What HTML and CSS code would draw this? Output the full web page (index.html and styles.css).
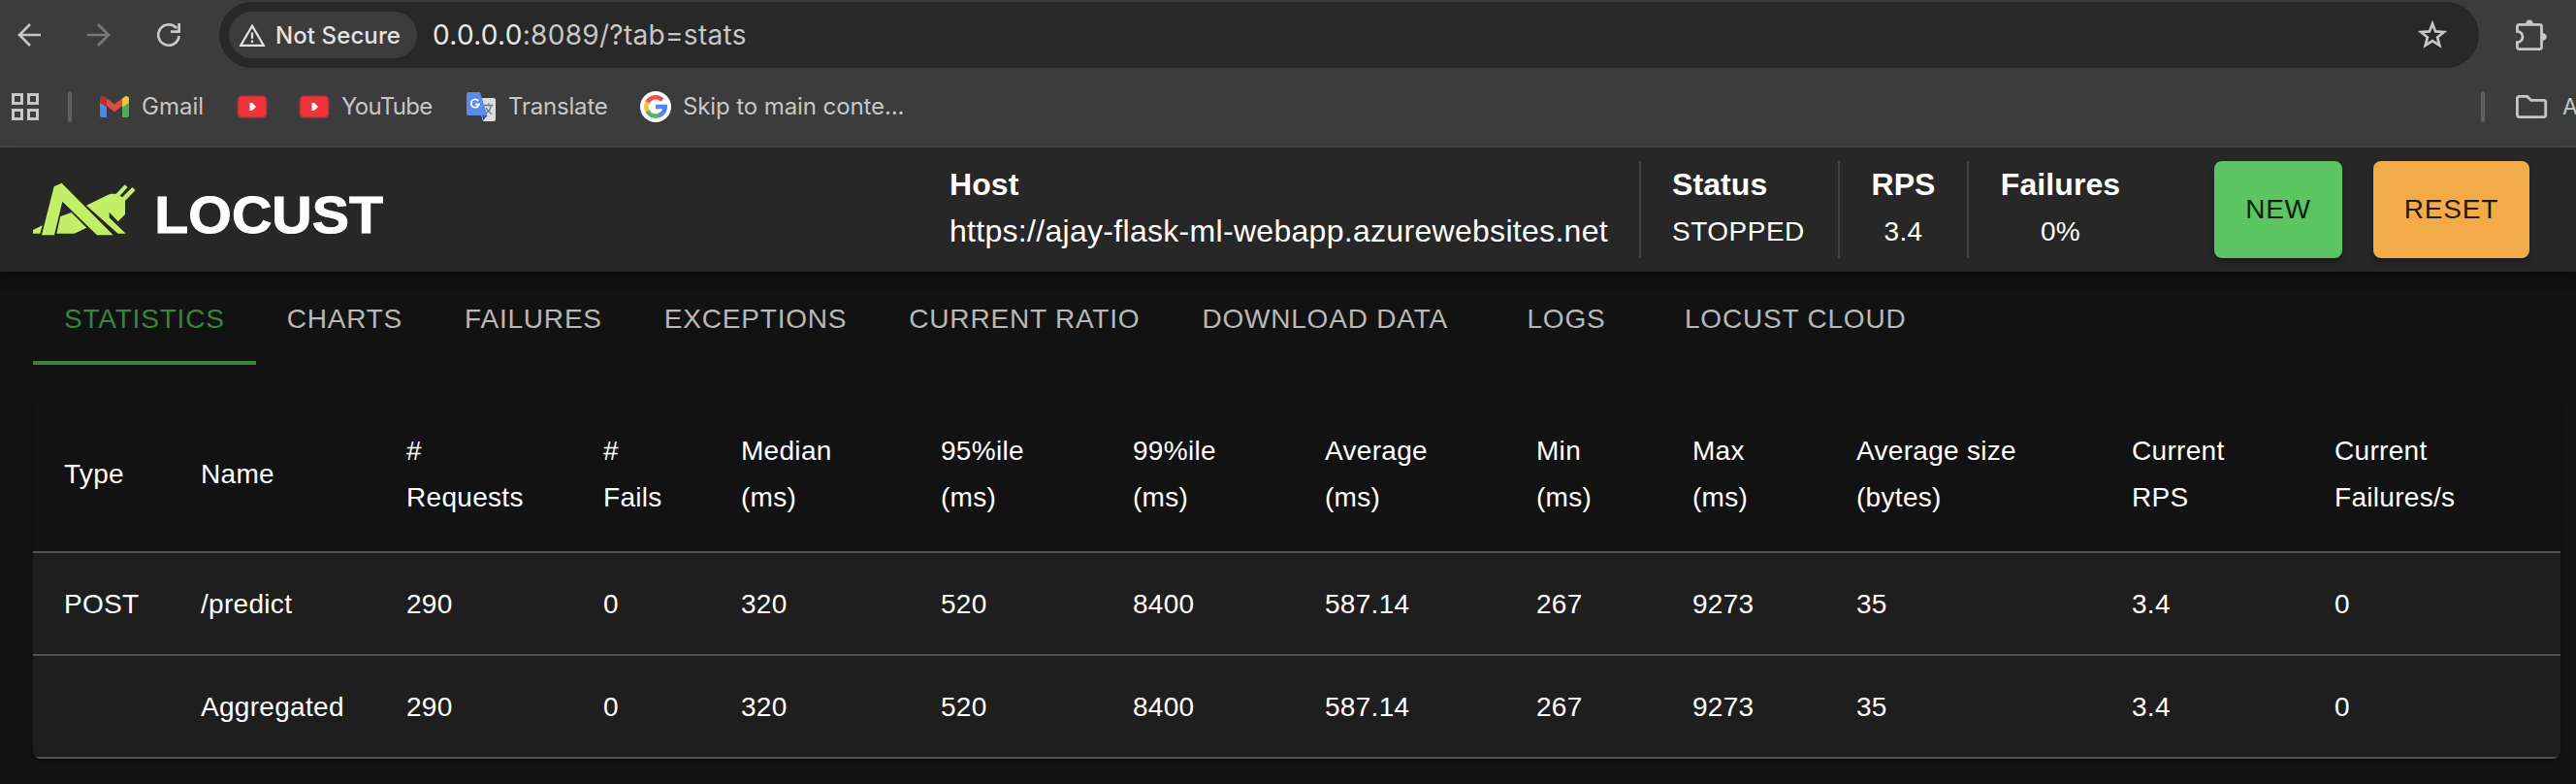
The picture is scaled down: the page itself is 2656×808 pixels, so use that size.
FILE: index.html
```html
<!DOCTYPE html>
<html lang="en">
<head>
<meta charset="utf-8">
<title>Locust</title>
<link rel="stylesheet" href="styles.css">
</head>
<body>
<div class="browser">
  <div class="toolbar">
    <svg class="nav-icon" viewBox="0 0 24 24"><path d="M24 12H2M13 1L2 12l11 11" fill="none" stroke="#c7c7c7" stroke-width="2.6"/></svg>
    <svg class="nav-icon" viewBox="0 0 24 24"><path d="M0 12h22M11 1l11 11-11 11" fill="none" stroke="#7a7a7a" stroke-width="2.6"/></svg>
    <svg class="nav-icon" viewBox="0 0 24 24"><path d="M22.6 13A10.7 10.7 0 1 1 20.2 5.2" fill="none" stroke="#c7c7c7" stroke-width="2.7"/><path d="M22.6 0v8.6H14" fill="none" stroke="#c7c7c7" stroke-width="2.8"/></svg>
    <div class="address">
      <div class="chip">
        <svg class="warn" viewBox="0 0 28 24"><path d="M14 2.6L25.8 22.8H2.2z" fill="none" stroke="#e3e3e3" stroke-width="2.2"/><path d="M14 9.5v6.2M14 17.6v2.4" stroke="#e3e3e3" stroke-width="2.2"/></svg>
        <span class="chip-text">Not Secure</span>
      </div>
      <div class="url"><span class="url-host">0.0.0.0</span>:8089/?tab=stats</div>
      <svg class="star" viewBox="0 0 32 32"><path d="M16 4.5l3.1 7.9 8.6.6-6.6 5.4 2.2 8.4-7.3-4.6-7.3 4.6 2.2-8.4L4.300 13l8.600-.6z" fill="none" stroke="#c7c7c7" stroke-width="2.700"/></svg>
    </div>
    <svg class="puzzle" viewBox="0 0 32 32"><path d="M4 5.400h20.500a2 2 0 0 1 2 2V28.600a2 2 0 0 1-2 2H3.400a2 2 0 0 1-2-2V23.600a5.200 5.200 0 0 0 0-11.200V7.400a2 2 0 0 1 2-2z" fill="none" stroke="#c7c7c7" stroke-width="2.800"/><path d="M10 5a4 4.600 0 0 1 8 0zM27 14a4.800 4 0 0 1 0 8z" fill="#c7c7c7"/></svg>
  </div>
  <div class="bookmarks">
    <svg class="apps" viewBox="0 0 28 28"><path d="M1.500 1.500h9v9h-9zM17.500 1.500h9v9h-9zM1.500 17.500h9v9h-9zM17.500 17.500h9v9h-9z" fill="none" stroke="#c7c7c7" stroke-width="3"/></svg>
    <i class="bar bar-left"></i>
    <div class="bookmark bm-gmail">
      <svg class="gmail" viewBox="0 0 30 22"><path d="M0 5l7 5v12H2a2 2 0 0 1-2-2z" fill="#4f86ee"/><path d="M30 5l-7 5v12h5a2 2 0 0 0 2-2z" fill="#57a85b"/><path d="M7 2.500l8 6 8-6V10l-8 6.500L7 10z" fill="#dc4e3f"/><path d="M0 7V3C0 0 3-1 5 1l2 1.500V11.500z" fill="#b5332b"/><path d="M30 7V3c0-3-3-4-5-2l-2 1.500v9z" fill="#f4c042"/></svg>
      <span class="t-gmail">Gmail</span>
    </div>
    <svg class="yt" viewBox="0 0 32 24"><rect x=".5" y=".3" width="31" height="23.400" rx="5" fill="#a53439"/><rect x="2" y="1.500" width="28" height="21" rx="4" fill="#ee333d"/><path d="M13.500 8h2.500l4 4-4 4h-2.500z" fill="#fff"/></svg>
    <div class="bookmark bm-youtube">
      <svg class="yt" viewBox="0 0 32 24"><rect x=".5" y=".3" width="31" height="23.400" rx="5" fill="#a53439"/><rect x="2" y="1.500" width="28" height="21" rx="4" fill="#ee333d"/><path d="M13.500 8h2.500l4 4-4 4h-2.500z" fill="#fff"/></svg>
      <span class="t-youtube">YouTube</span>
    </div>
    <div class="bookmark bm-translate">
      <svg class="translate" viewBox="0 0 30 30"><path d="M10 6h18a2 2 0 0 1 2 2v20a2 2 0 0 1-2 2H17z" fill="#dedede"/><path d="M16 24h5.500l-4.500 5.500z" fill="#3a4fb5"/><path d="M2 0h12l7.500 24H2a2 2 0 0 1-2-2V2a2 2 0 0 1 2-2z" fill="#5b8bee"/><path d="M12.300 9A4.200 4.200 0 1 0 13 12.500H9.200" fill="none" stroke="#fff" stroke-width="1.800"/><path d="M18 13.500h9.500M22.700 11.500v2M25.500 13.500c-.8 4-3.500 7-6 8.500M20 16c1 2.500 3.500 5 6.500 6.500" fill="none" stroke="#607d8b" stroke-width="1.300"/></svg>
      <span class="t-translate">Translate</span>
    </div>
    <div class="bookmark bm-google">
      <svg class="google" viewBox="0 0 32 32"><circle cx="16" cy="16" r="16" fill="#fff"/><g fill="none" stroke-width="4.600"><path d="M22.900 9.100A9.700 9.700 0 0 0 7.200 12" stroke="#ea5548"/><path d="M7.600 11.200A9.700 9.700 0 0 0 7.800 21" stroke="#f6c33c"/><path d="M7.500 20.500A9.700 9.700 0 0 0 21 24.300" stroke="#5bb464"/><path d="M20.200 24.700A9.700 9.700 0 0 0 25.700 16H16" stroke="#4a87f2"/></g></svg>
      <span class="t-google">Skip to main conte...</span>
    </div>
    <i class="bar bar-right"></i>
    <svg class="folder" viewBox="0 0 32 24"><path d="M3.400 1.400h8.300l4 4h13a2 2 0 0 1 2 2v13.200a2 2 0 0 1-2 2H3.400a2 2 0 0 1-2-2V3.400a2 2 0 0 1 2-2z" fill="none" stroke="#c7c7c7" stroke-width="2.800"/></svg>
    <span class="folder-text">A</span>
  </div>
</div>

<header class="header">
  <svg class="logo" viewBox="102 115 1092 168">
    <g fill="#c3ee68">
      <path d="M102 262l29-14-7 25h-22z"/>
      <path d="M167 128l24-11L350 278h-50L193 174l-25 104h-39z"/>
      <path d="M187 220l34-12 47 47-38 18h-55z"/>
      <path d="M267 186l74-36h18l27-28 9 8-24 26 7 5 31-31 10 9-32 33v42l-22 22-27-29v17l51 49h-24z"/>
    </g>
    <text class="logo-text" x="478" y="272" textLength="707" lengthAdjust="spacingAndGlyphs">LOCUST</text>
  </svg>
  <div class="stats">
    <div class="stat stat-host"><b>Host</b><span class="host-url">https://ajay-flask-ml-webapp.azurewebsites.net</span></div>
    <div class="stat stat-status"><b>Status</b><span>STOPPED</span></div>
    <div class="stat stat-rps"><b>RPS</b><span>3.4</span></div>
    <div class="stat stat-failures"><b>Failures</b><span>0%</span></div>
  </div>
  <button class="btn btn-new">NEW</button>
  <button class="btn btn-reset">RESET</button>
</header>

<nav class="tabs">
  <a class="tab tab-active">STATISTICS</a><a class="tab">CHARTS</a><a class="tab">FAILURES</a><a class="tab">EXCEPTIONS</a><a class="tab">CURRENT RATIO</a><a class="tab">DOWNLOAD DATA</a><a class="tab">LOGS</a><a class="tab">LOCUST CLOUD</a>
</nav>

<main class="panel">
  <table class="table">
    <colgroup><col class="c1"><col class="c2"><col class="c3"><col class="c4"><col class="c5"><col class="c6"><col class="c7"><col class="c8"><col class="c9"><col class="c10"><col class="c11"><col class="c12"><col></colgroup>
    <thead><tr><th>Type</th><th>Name</th><th>#<br>Requests</th><th>#<br>Fails</th><th>Median<br>(ms)</th><th>95%ile<br>(ms)</th><th>99%ile<br>(ms)</th><th>Average<br>(ms)</th><th>Min<br>(ms)</th><th>Max<br>(ms)</th><th>Average size<br>(bytes)</th><th>Current<br>RPS</th><th>Current<br>Failures/s</th></tr></thead>
    <tbody>
      <tr><td>POST</td><td>/predict</td><td>290</td><td>0</td><td>320</td><td>520</td><td>8400</td><td>587.14</td><td>267</td><td>9273</td><td>35</td><td>3.4</td><td>0</td></tr>
      <tr><td></td><td>Aggregated</td><td>290</td><td>0</td><td>320</td><td>520</td><td>8400</td><td>587.14</td><td>267</td><td>9273</td><td>35</td><td>3.4</td><td>0</td></tr>
    </tbody>
  </table>
</main>
</body>
</html>
```
FILE: styles.css
```css
* { box-sizing: border-box; }
body {
  margin: 0;
  height: 808px;
  overflow: hidden;
  background: #121212;
  color: #fff;
  font-family: "Liberation Sans", Arial, sans-serif;
  font-size: 28px;
}
svg { display: block; flex: none; overflow: visible; }

.browser {
  height: 152px;
  overflow: hidden;
  background: #3c3c3c;
  border-bottom: 2px solid #4a4a4a;
  font-family: Inter, sans-serif;
  color: #c7c7c7;
}
.toolbar { display: flex; align-items: center; height: 72px; padding-left: 18px; }
.nav-icon { width: 24px; height: 24px; margin-right: 48px; }
.nav-icon:nth-child(3) { margin-right: 40px; }
.address {
  display: flex;
  align-items: center;
  width: 2330px;
  height: 68px;
  padding: 0 32px 0 10px;
  border-radius: 34px;
  background: #282828;
}
.chip {
  display: flex;
  align-items: center;
  width: 194px;
  height: 48px;
  padding-left: 10px;
  border-radius: 24px;
  background: #3c3c3c;
  color: #e3e3e3;
}
.warn { width: 28px; height: 24px; margin-right: 10px; }
.chip-text { font-size: 24px; font-weight: 500; white-space: nowrap; letter-spacing: 0.1px; }
.url { flex: 1; margin-left: 16px; font-size: 28px; letter-spacing: 0.3px; }
.url-host { color: #e8e8e8; }
.star { width: 32px; height: 32px; }
.puzzle { width: 32px; height: 32px; margin-left: 38px; }

.bookmarks {
  display: flex;
  align-items: center;
  height: 76px;
  padding-left: 12px;
  font-size: 24px;
  white-space: nowrap;
}
.bookmark span { margin-top: -2px; }
.apps { width: 28px; height: 28px; }
.bar { flex: none; width: 4px; height: 32px; border-radius: 2px; background: #5f5f5f; }
.bar-left { margin: 0 29px 0 30px; }
.bookmark { display: flex; align-items: center; }
.gmail { width: 30px; height: 22px; margin-right: 13px; }
.yt { width: 32px; height: 24px; }
.bm-gmail { width: 141px; }
.bm-youtube { width: 173px; margin-left: 32px; }
.bm-youtube .yt { margin-right: 12px; }
.t-youtube { letter-spacing: -0.7px; }
.bm-translate { width: 179px; }
.t-translate { letter-spacing: -0.2px; }
.t-google { letter-spacing: -0.1px; }
.translate { width: 30px; height: 30px; margin-right: 13px; }
.google { width: 32px; height: 32px; margin-right: 12px; }
.bar-right { margin: 0 32px 0 auto; }
.folder { width: 32px; height: 24px; }
.folder-text { width: 14px; margin-left: 16px; font-size: 23px; letter-spacing: -1px; }

.header {
  position: relative;
  display: flex;
  align-items: center;
  height: 128px;
  padding: 0 48px 0 34px;
  background: #272727;
  box-shadow: 0 4px 8px -2px rgba(0,0,0,.2), 0 8px 10px rgba(0,0,0,.14), 0 2px 20px rgba(0,0,0,.12);
}
.logo { width: 364px; height: 56px; }
.logo-text { font: bold 163px "Liberation Sans", Arial, sans-serif; fill: #fff; stroke: #fff; stroke-width: 3px; }
.stats { display: flex; height: 100px; margin-left: auto; margin-right: 64px; }
.stat {
  display: flex;
  flex-direction: column;
  align-items: center;
  padding: 0 32px;
  border-left: 2px solid #414141;
  line-height: 48px;
  white-space: nowrap;
}
.stat b { font-size: 32px; letter-spacing: 0.1px; }
.stat span { margin-top: 1px; letter-spacing: 0.3px; }
.stat-status span { letter-spacing: 0.5px; }
.stat-host { width: 711px; align-items: flex-start; padding-left: 0; border-left: 0; }
.stat .host-url { margin-top: 0; font-size: 32px; letter-spacing: 0.3px; }
.stat-status { width: 205px; align-items: flex-start; }
.stat-rps { width: 133px; }
.stat-failures { width: 191px; }
.btn {
  height: 100px;
  padding: 0;
  border: 0;
  border-radius: 8px;
  color: rgba(0,0,0,.87);
  font: 28px "Liberation Sans", Arial, sans-serif;
  letter-spacing: 0.8px;
  box-shadow: 0 4px 6px rgba(0,0,0,.3);
}
.btn-new { width: 132px; margin-right: 32px; background: #5ac561; }
.btn-reset { width: 161px; background: #f3ab47; }

.tabs { display: flex; height: 96px; padding-left: 34px; }
.tab {
  min-width: 180px;
  padding: 0 32px;
  color: #b8b8b8;
  line-height: 98px;
  letter-spacing: 0.8px;
  text-align: center;
  white-space: nowrap;
}
.tab-active { color: #3c8142; border-bottom: 4px solid #3c8142; }

.panel {
  width: 2606px;
  margin: 32px 0 0 34px;
  overflow: hidden;
  border-radius: 8px;
  background: #1e1e1e;
  box-shadow: 0 2px 4px rgba(0,0,0,.25);
}
.table { width: 100%; table-layout: fixed; border-collapse: separate; border-spacing: 0; letter-spacing: 0.3px; }
.table th, .table td {
  padding: 33px 0 31px 32px;
  border-bottom: 2px solid #515151;
  text-align: left;
  font-weight: 400;
  white-space: nowrap;
}
.table th { height: 162px; background: #121212; line-height: 48px; }
.table td { height: 106px; line-height: 40px; }
.c1 { width: 141px; }
.c2 { width: 212px; }
.c3 { width: 203px; }
.c4 { width: 142px; }
.c5 { width: 206px; }
.c6 { width: 198px; }
.c7 { width: 198px; }
.c8 { width: 218px; }
.c9 { width: 161px; }
.c10 { width: 169px; }
.c11 { width: 284px; }
.c12 { width: 209px; }
```
